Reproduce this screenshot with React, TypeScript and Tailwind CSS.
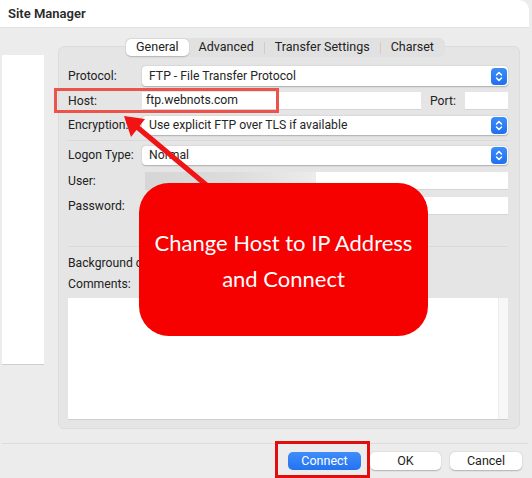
import React from 'react';

const Stepper: React.FC = () => (
    <div className="w-[16px] h-[17px] rounded-[4px] bg-gradient-to-b from-[#3d8cfb] to-[#1f6ff0] flex items-center justify-center shrink-0">
        <svg width="8" height="11" viewBox="0 0 8 11" fill="none" stroke="white" strokeWidth="1.5" strokeLinecap="round" strokeLinejoin="round">
            <path d="M1.5 4 L4 1.5 L6.5 4" />
            <path d="M1.5 7 L4 9.5 L6.5 7" />
        </svg>
    </div>
);

const Select: React.FC<{ value: string; className?: string }> = ({ value, className }) => (
    <div className={`flex-1 flex items-center justify-between bg-white rounded-[4px] shadow-[0_0.5px_1.5px_rgba(0,0,0,0.25)] pl-[7px] pr-[1px] ${className ?? 'h-[19px]'}`}>
        <span className="text-[12.2px] text-[#262626] leading-none">{value}</span>
        <Stepper />
    </div>
);

const TextInput: React.FC<{ value?: string; className?: string; children?: React.ReactNode }> = ({ value, className, children }) => (
    <div className={`h-[18px] bg-white border-b border-[#d4d4d4] flex items-center px-[4px] ${className ?? 'flex-1'}`}>
        {value && <span className="text-[12.2px] text-[#1e1e1e] leading-none">{value}</span>}
        {children}
    </div>
);

const Label: React.FC<{ text: string }> = ({ text }) => (
    <div className="w-[74px] shrink-0 text-[12.2px] text-[#222] leading-none whitespace-nowrap">{text}</div>
);

const tabs = ['General', 'Advanced', 'Transfer Settings', 'Charset'];

const App: React.FC = () => {
    return (
        <div className="relative w-[532px] h-[478px] overflow-hidden bg-[#ececec] font-['Roboto','Liberation_Sans',sans-serif]">
            {/* title bar */}
            <div className="h-[28px] w-[529px] bg-white rounded-tr-[10px] flex items-center px-[8px] border-b border-[#e2e2e2]">
                <span className="text-[13px] font-semibold text-[#2a2a2a]">Site Manager</span>
            </div>

            <div className="flex w-[529px]">
                {/* site list */}
                <div className="ml-[2px] mt-[27px] w-[42px] h-[310px] bg-white border-b border-[#cfcfcf] shrink-0" />

                {/* tab panel */}
                <div className="ml-[14px] mt-[10px] w-[462px] flex flex-col">
                    <div className="flex justify-center relative z-10">
                        <div className="ml-[-8px] flex items-center h-[19px] bg-[#e1e1e1] rounded-[6px] p-[1px]">
                            {tabs.map((t, i) => (
                                <div key={t} className="flex items-center">
                                    {i > 1 && <div className="w-px h-[12px] bg-[#cdcdcd]" />}
                                    <div className={`h-[17px] flex items-center px-[10px] text-[12.5px] leading-none text-[#222] ${i === 0 ? 'bg-white rounded-[5px] shadow-[0_0.5px_1.5px_rgba(0,0,0,0.2)]' : ''}`}>
                                        {t}
                                    </div>
                                </div>
                            ))}
                        </div>
                    </div>

                    <div className="-mt-[11px] h-[383px] bg-[#e5e5e5] border border-[#dcdcdc] rounded-[6px] pl-[9px] pr-[11px] pt-[19px] flex flex-col">
                        <div className="flex items-center h-[20px]">
                            <Label text="Protocol:" />
                            <Select value="FTP - File Transfer Protocol" className="h-[20px]" />
                        </div>

                        <div className="flex items-center h-[18px] mt-[6px]">
                            <Label text="Host:" />
                            <TextInput value="ftp.webnots.com" className="w-[279px] pl-[4px]" />
                            <span className="ml-[9px] w-[35px] text-[12.2px] text-[#222] leading-none">Port:</span>
                            <TextInput className="flex-1" />
                        </div>

                        <div className="flex items-center h-[18px] mt-[6px]">
                            <Label text="Encryption:" />
                            <Select value="Use explicit FTP over TLS if available" />
                        </div>

                        <div className="mt-[6px] h-px bg-[#d9d9d9]" />

                        <div className="flex items-center h-[18px] mt-[5px]">
                            <Label text="Logon Type:" />
                            <Select value="Normal" />
                        </div>

                        <div className="flex items-center h-[18px] mt-[8px]">
                            <Label text="User:" />
                            <TextInput className="flex-1 ml-[3px] !px-0">
                                <div className="w-[171px] h-full bg-gradient-to-r from-[#d6d6d6] via-[#dcdcdc] to-[#ececec]" />
                            </TextInput>
                        </div>

                        <div className="flex items-center h-[18px] mt-[7px]">
                            <Label text="Password:" />
                            <TextInput className="flex-1 ml-[3px]" />
                        </div>

                        <div className="mt-[31px] h-px bg-[#dadada]" />

                        <div className="mt-[10px] text-[12.2px] text-[#222] leading-none">Background color:</div>
                        <div className="mt-[9px] text-[12.2px] text-[#222] leading-none">Comments:</div>

                        <div className="mt-[8px] h-[122px] bg-white border-b border-[#cfcfcf] flex justify-end">
                            <div className="w-[10px] h-full bg-[#f7f7f7] border-l border-[#ececec]" />
                        </div>
                    </div>
                </div>
            </div>

            {/* bottom separator */}
            <div className="absolute left-[2px] top-[443px] w-[526px] h-px bg-[#dcdcdc]" />

            {/* buttons */}
            <div className="absolute left-[288px] top-[452px] flex gap-[9px]">
                <div className="w-[73px] h-[18px] rounded-[5px] bg-gradient-to-b from-[#3f8cfa] to-[#2373f2] flex items-center justify-center text-[12.5px] text-white leading-none">Connect</div>
                <div className="w-[71px] h-[18px] rounded-[5px] bg-white shadow-[0_0.5px_1.5px_rgba(0,0,0,0.25)] flex items-center justify-center text-[12.5px] text-[#222] leading-none">OK</div>
                <div className="w-[72px] h-[18px] rounded-[5px] bg-white shadow-[0_0.5px_1.5px_rgba(0,0,0,0.25)] flex items-center justify-center text-[12.5px] text-[#222] leading-none">Cancel</div>
            </div>

            {/* annotations */}
            <div className="absolute left-[54px] top-[88px] w-[225px] h-[25px] border-[3px] border-[#ec544b]" />
            <div className="absolute left-[275px] top-[441px] w-[95px] h-[37px] border-[3px] border-[#e20d0d]" />

            <svg className="absolute left-0 top-0" width="532" height="478" viewBox="0 0 532 478">
                <line x1="137" y1="127" x2="210" y2="188" stroke="#f01414" strokeWidth="5" />
                <polygon points="124,116 145,119 131,137" fill="#f01414" />
            </svg>

            <div className="absolute left-[139px] top-[183px] w-[289px] h-[153px] rounded-[30px] bg-[#f70000] flex flex-col items-center justify-center font-['Lato','Open_Sans',sans-serif] text-white text-[22px] leading-[36px] pt-[3px]">
                <span>Change Host to IP Address</span>
                <span>and Connect</span>
            </div>
        </div>
    );
};

export default App;
